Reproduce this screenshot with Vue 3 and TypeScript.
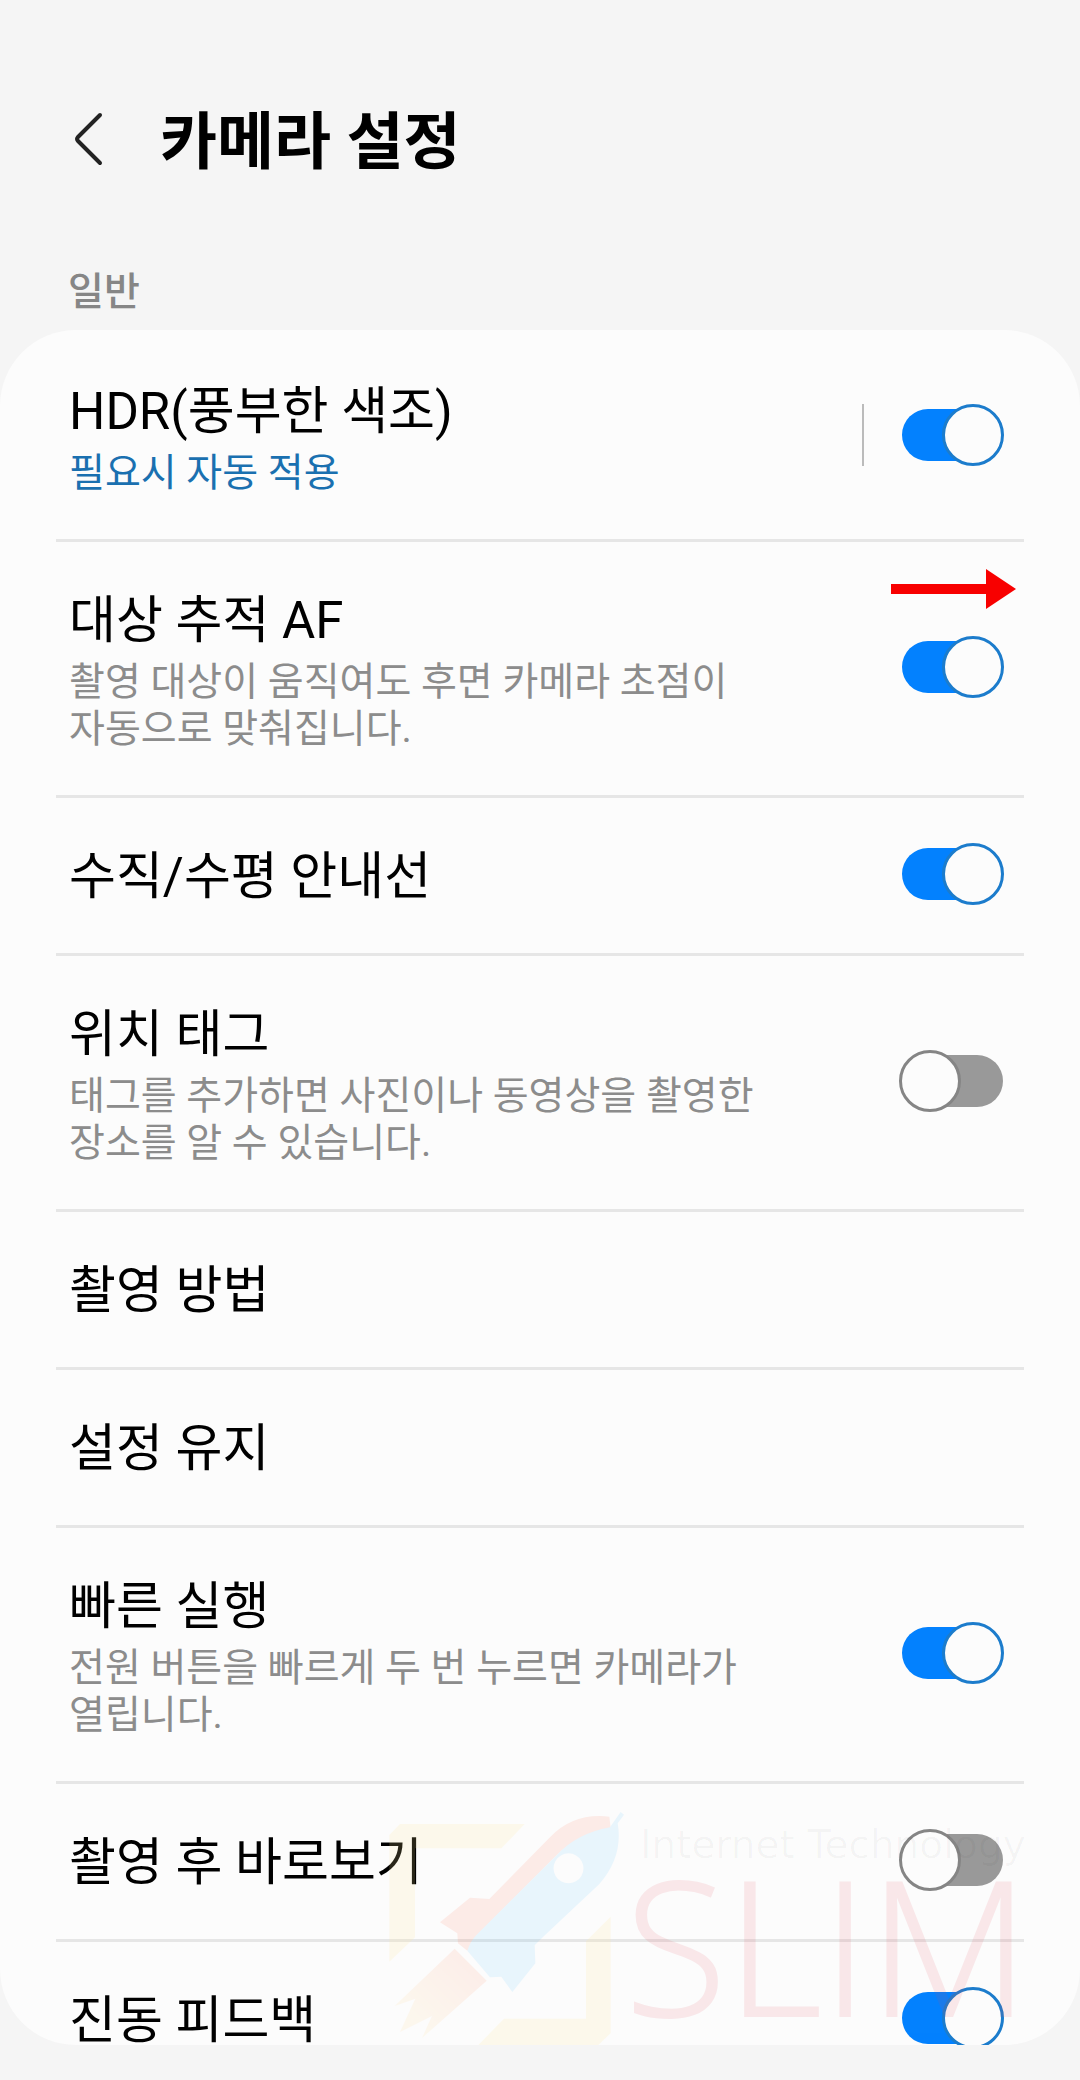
<script setup lang="ts">
import { ref } from 'vue'

interface Setting {
  id: string
  title: string
  summary?: string
  accent?: boolean
  split?: boolean
  pointer?: boolean
  on?: boolean
}

const settings = ref<Setting[]>([
  { id: 'hdr', title: 'HDR(풍부한 색조)', summary: '필요시 자동 적용', accent: true, split: true, on: true },
  { id: 'tracking-af', title: '대상 추적 AF', summary: '촬영 대상이 움직여도 후면 카메라 초점이 자동으로 맞춰집니다.', pointer: true, on: true },
  { id: 'grid', title: '수직/수평 안내선', on: true },
  { id: 'location', title: '위치 태그', summary: '태그를 추가하면 사진이나 동영상을 촬영한 장소를 알 수 있습니다.', on: false },
  { id: 'methods', title: '촬영 방법' },
  { id: 'keep', title: '설정 유지' },
  { id: 'quick-launch', title: '빠른 실행', summary: '전원 버튼을 빠르게 두 번 누르면 카메라가 열립니다.', on: true },
  { id: 'review', title: '촬영 후 바로보기', on: false },
  { id: 'vibration', title: '진동 피드백', on: true },
])
</script>

<template>
  <main class="screen">
    <header class="bar">
      <button class="back" type="button" aria-label="뒤로">
        <svg width="30" height="56" viewBox="0 0 30 56" fill="none" stroke="#222" stroke-width="4" stroke-linecap="round" stroke-linejoin="round">
          <path d="M26 4 L4 26 Q2 28 4 30 L26 52" />
        </svg>
      </button>
      <h1 class="heading">카메라 설정</h1>
    </header>

    <h2 class="section">일반</h2>

    <section class="card">
      <ul class="list">
        <li v-for="item in settings" :key="item.id" class="row">
          <div class="text">
            <label v-if="item.on !== undefined" class="title" :for="item.id">{{ item.title }}</label>
            <button v-else class="title" type="button">{{ item.title }}</button>
            <p v-if="item.summary" class="summary" :class="{ accent: item.accent }">{{ item.summary }}</p>
          </div>
          <span v-if="item.split" class="split"></span>
          <input v-if="item.on !== undefined" :id="item.id" v-model="item.on" class="switch" type="checkbox" role="switch" />
          <svg v-if="item.pointer" class="pointer" width="126" height="40" viewBox="0 0 126 40" aria-hidden="true">
            <path d="M1 15 H96 V0 L126 20 L96 40 V25 H1 Z" fill="#f80000" />
          </svg>
        </li>
      </ul>

      <div class="mark" aria-hidden="true">
        <svg width="237" height="235" viewBox="84 90 711 705">
          <defs>
            <linearGradient id="flame" x1="1" y1="0" x2="0" y2="1">
              <stop offset="0.1" stop-color="#ff7655" />
              <stop offset="0.8" stop-color="#ffd880" />
            </linearGradient>
          </defs>
          <g fill="#ffe898" opacity="0.16">
            <path d="M120 132 H494 L424 205 H165 V472 L88 545 V165 Z" />
            <path d="M752 410 V760 L715 795 H355 L432 716 H678 V484 Z" />
          </g>
          <g opacity="0.11">
            <path d="M748 110 Q640 98 570 172 L388 357 L330 353 L240 427 L292 460 L294 490 L322 512 L350 466 L590 226 Q650 165 752 145 Z" fill="#ff6645" />
            <path d="M782 96 L792 104 L773 130 Q790 230 718 312 L552 468 L524 496 L526 550 L457 636 L424 590 L390 592 L322 512 Q330 484 350 464 L590 226 Q650 160 750 142 Z M625 220 a45 45 0 1 0 1 0 Z" fill="#4cc1ff" fill-rule="evenodd" />
            <path d="M284 506 L380 602 L186 774 L216 708 L120 756 L166 656 L104 678 Z" fill="url(#flame)" />
          </g>
        </svg>
        <div class="words">
          <span class="tagline">Internet Technology</span>
          <span class="brand">SLIM</span>
        </div>
      </div>
    </section>
  </main>
</template>

<style>
body {
  margin: 0;
  background: #f5f5f5;
}
</style>

<style scoped>
.screen {
  display: flex;
  flex-direction: column;
  box-sizing: border-box;
  height: 100vh;
  padding: 98px 0 35px;
  background: #f5f5f5;
  color: #000;
  font-family: Roboto, "Noto Sans CJK KR", sans-serif;
  word-break: keep-all;
}

.bar {
  display: flex;
  align-items: flex-start;
  gap: 56px;
  padding: 0 74px;
}

button {
  padding: 0;
  border: 0;
  background: none;
  color: inherit;
  font-family: inherit;
}

.back {
  display: flex;
  padding-top: 13px;
}

.heading {
  margin: 0;
  font-size: 62px;
  font-weight: 700;
  line-height: 90px;
}

.section {
  margin: 81px 68px 14px;
  color: #868686;
  font-size: 39px;
  font-weight: 500;
  line-height: 47px;
}

.card {
  position: relative;
  flex: 1;
  min-height: 0;
  overflow: hidden;
  border-radius: 76px;
  background: #fcfcfc;
}

.list {
  margin: 0 56px;
  padding: 0;
  list-style: none;
}

.row {
  position: relative;
  display: flex;
  align-items: center;
  padding: 45px 20px 45px 13px;
  border-top: 3px solid #e6e6e6;
}

.row:first-child {
  border-top-color: transparent;
}

.text {
  flex: 1;
  padding: 3px 60px 0 0;
}

.title {
  display: block;
  font-size: 51px;
  font-weight: 400;
  line-height: 62px;
  text-align: left;
}

.summary {
  margin: 7px 0 -3px;
  color: #8c8c8c;
  font-size: 39px;
  line-height: 47px;
}

.summary.accent {
  color: #1a70b0;
}

.split {
  width: 2px;
  height: 62px;
  margin: 0 35px 3px 0;
  background: #bbb;
}

.switch {
  position: relative;
  flex: none;
  width: 105px;
  height: 62px;
  margin: 0 0 3px;
  appearance: none;
}

.switch::before {
  content: "";
  position: absolute;
  inset: 5px 1px 5px 3px;
  border-radius: 26px;
  background: #999;
}

.switch::after {
  content: "";
  position: absolute;
  top: 0;
  left: 0;
  box-sizing: border-box;
  width: 62px;
  height: 62px;
  border: 3px solid #858585;
  border-radius: 50%;
  background: #fcfcfc;
}

.switch:checked::before {
  background: #0381fe;
}

.switch:checked::after {
  right: 0;
  left: auto;
  border-color: #1c7ccc;
}

.pointer {
  position: absolute;
  top: 27px;
  right: 8px;
}

.mark {
  position: absolute;
  right: 53px;
  bottom: 0;
  display: flex;
  pointer-events: none;
  white-space: nowrap;
}

.words {
  display: flex;
  flex-direction: column;
  width: 402px;
}

.tagline {
  margin-left: 15px;
  color: rgba(0, 0, 0, 0.03);
  font-family: "DejaVu Sans", sans-serif;
  font-size: 39px;
  line-height: 70px;
}

.brand {
  color: #e34555;
  font-family: "Open Sans", sans-serif;
  font-size: 186px;
  font-weight: 300;
  line-height: 128px;
  opacity: 0.11;
  -webkit-text-stroke: 2px #e34555;
}
</style>
